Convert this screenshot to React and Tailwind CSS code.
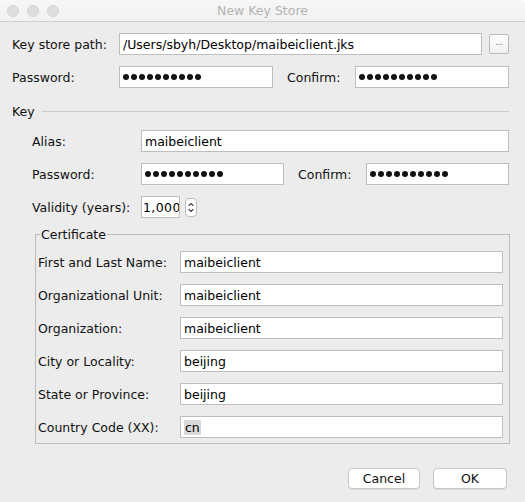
const Field = ({ w, children }) => (
  <div className={`${w} h-[22px] shrink-0 border border-[#bebebe] bg-white flex items-center pl-[3px] overflow-hidden whitespace-nowrap text-[#000]`}>
    {children}
  </div>
);

const Dots = () => (
  <div className="flex items-center gap-[2px]">
    {Array.from({ length: 10 }).map((_, i) => (
      <span key={i} className="w-[6px] h-[6px] rounded-full bg-[#111]" />
    ))}
  </div>
);

const Label = ({ w, children, className = "" }) => (
  <div className={`${w} shrink-0 whitespace-nowrap ${className}`}>{children}</div>
);

export default function App() {
  return (
    <div className="w-[525px] h-[502px] bg-[#ececec] font-['DejaVu_Sans',sans-serif] text-[12.5px] leading-[15px] text-[#111] rounded-t-[5px] overflow-hidden flex flex-col">
      {/* Title bar */}
      <div className="h-[22px] shrink-0 grid grid-cols-[1fr_auto_1fr] items-center border-b border-[#d0d0d0] bg-gradient-to-b from-[#f7f7f7] to-[#f1f1f1]">
        <div className="flex items-center gap-[8px] pl-[7px]">
          <span className="w-[12px] h-[12px] rounded-full bg-[#dedede] border border-[#d2d2d2]" />
          <span className="w-[12px] h-[12px] rounded-full bg-[#dedede] border border-[#d2d2d2]" />
          <span className="w-[12px] h-[12px] rounded-full bg-[#dedede] border border-[#d2d2d2]" />
        </div>
        <div className="text-[#b3b3b3] text-[12.5px]">New Key Store</div>
        <div />
      </div>

      {/* Content */}
      <div className="flex flex-col pt-[11px]">
        <div className="flex items-center h-[22px] pl-[12px]">
          <Label w="w-[107px]">Key store path:</Label>
          <Field w="w-[363px]">/Users/sbyh/Desktop/maibeiclient.jks</Field>
          <div className="ml-[7px] w-[20px] h-[20px] border border-[#bababa] rounded-[2px] bg-gradient-to-b from-[#fdfdfd] to-[#f0f0f0] flex items-center justify-center text-[8px] leading-[8px] text-[#666] pb-[2px]">
            ...
          </div>
        </div>

        <div className="flex items-center h-[22px] mt-[11px] pl-[12px]">
          <Label w="w-[107px]">Password:</Label>
          <Field w="w-[154px]"><Dots /></Field>
          <Label w="w-[68px]" className="ml-[14px]">Confirm:</Label>
          <Field w="w-[154px]"><Dots /></Field>
        </div>

        <div className="flex items-center h-[16px] mt-[15px] pl-[12px] pr-[16px]">
          <span>Key</span>
          <div className="flex-1 h-px bg-[#cbcbcb] ml-[7px]" />
        </div>

        <div className="flex items-center h-[22px] mt-[11px] pl-[32px]">
          <Label w="w-[109px]">Alias:</Label>
          <Field w="w-[368px]">maibeiclient</Field>
        </div>

        <div className="flex items-center h-[22px] mt-[11px] pl-[32px]">
          <Label w="w-[109px]">Password:</Label>
          <Field w="w-[143px]"><Dots /></Field>
          <Label w="w-[68px]" className="ml-[14px]">Confirm:</Label>
          <Field w="w-[143px]"><Dots /></Field>
        </div>

        <div className="flex items-center h-[22px] mt-[11px] pl-[32px]">
          <Label w="w-[109px]">Validity (years):</Label>
          <div className="w-[39px] h-[22px] shrink-0 border border-[#bebebe] bg-white flex items-center pl-[1px] overflow-hidden whitespace-nowrap text-[#000] tracking-[0.4px]">
            1,000
          </div>
          <div className="ml-[5px] w-[12px] h-[19px] rounded-[4px] border border-[#bdbdbd] bg-white flex items-center justify-center">
            <svg width="10" height="17" viewBox="0 0 10 17" fill="none" stroke="#444" strokeWidth="1.1" strokeLinecap="round" strokeLinejoin="round">
              <path d="M3 6.5 L5 4.5 L7 6.5" />
              <path d="M3 10.5 L5 12.5 L7 10.5" />
            </svg>
          </div>
        </div>

        <fieldset className="mt-[9px] ml-[35px] w-[475px] border border-[#bcbcbc] pt-[9px] pb-[5px] pl-[2px] pr-[5px] flex flex-col gap-[11px]">
          <legend className="ml-[2px] px-[1px] leading-[15px]">Certificate</legend>
          {[
            ["First and Last Name:", "maibeiclient"],
            ["Organizational Unit:", "maibeiclient"],
            ["Organization:", "maibeiclient"],
            ["City or Locality:", "beijing"],
            ["State or Province:", "beijing"],
          ].map(([l, v]) => (
            <div key={l} className="flex items-center h-[22px]">
              <Label w="w-[142px]">{l}</Label>
              <Field w="w-[323px]">{v}</Field>
            </div>
          ))}
          <div className="flex items-center h-[22px]">
            <Label w="w-[142px]">Country Code (XX):</Label>
            <Field w="w-[323px]"><span className="bg-[#d9d9d9] px-[1px]">cn</span></Field>
          </div>
        </fieldset>

        <div className="flex justify-end gap-[13px] pr-[18px] mt-[24px]">
          <div className="w-[72px] h-[21px] bg-white border border-[#c6c6c6] rounded-[4px] shadow-[0_1px_0_rgba(0,0,0,0.06)] flex items-center justify-center text-[#111]">
            Cancel
          </div>
          <div className="w-[74px] h-[21px] bg-white border border-[#c6c6c6] rounded-[4px] shadow-[0_1px_0_rgba(0,0,0,0.06)] flex items-center justify-center text-[#111]">
            OK
          </div>
        </div>
      </div>
    </div>
  );
}
